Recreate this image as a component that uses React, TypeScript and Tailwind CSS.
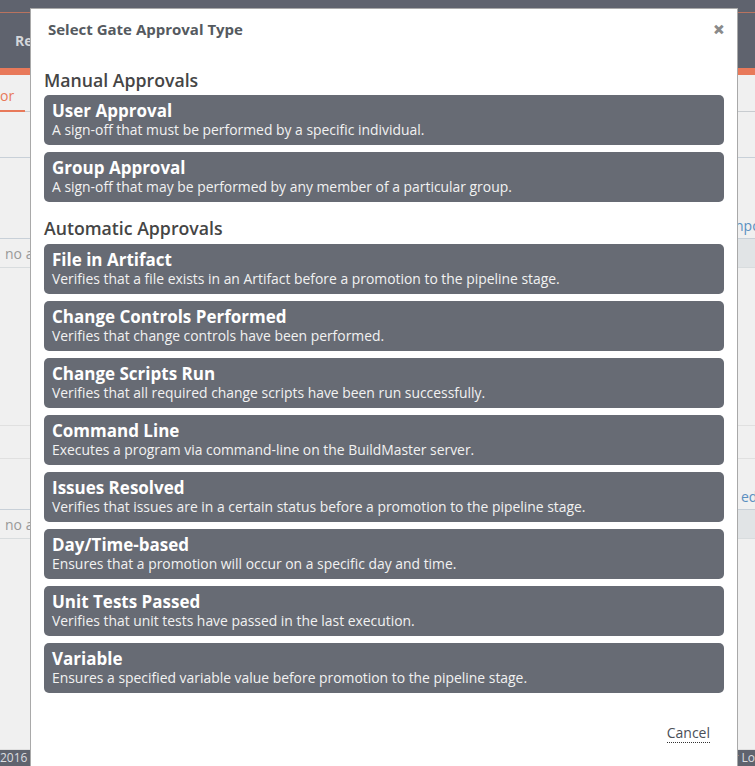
import React from "react";

const manual = [
  { t: "User Approval", d: "A sign-off that must be performed by a specific individual." },
  { t: "Group Approval", d: "A sign-off that may be performed by any member of a particular group." },
];
const auto = [
  { t: "File in Artifact", d: "Verifies that a file exists in an Artifact before a promotion to the pipeline stage." },
  { t: "Change Controls Performed", d: "Verifies that change controls have been performed." },
  { t: "Change Scripts Run", d: "Verifies that all required change scripts have been run successfully." },
  { t: "Command Line", d: "Executes a program via command-line on the BuildMaster server." },
  { t: "Issues Resolved", d: "Verifies that issues are in a certain status before a promotion to the pipeline stage." },
  { t: "Day/Time-based", d: "Ensures that a promotion will occur on a specific day and time." },
  { t: "Unit Tests Passed", d: "Verifies that unit tests have passed in the last execution." },
  { t: "Variable", d: "Ensures a specified variable value before promotion to the pipeline stage." },
];

function Card({ t, d }: { t: string; d: string }) {
  return (
    <div className="h-[50px] rounded-[5px] bg-[#676b74] px-[8px] pt-[5px] text-white cursor-pointer">
      <div className="text-[17px] font-bold leading-[22px]">{t}</div>
      <div className="text-[13.9px] leading-[15px] text-[#f2f2f2]">{d}</div>
    </div>
  );
}

export default function App() {
  return (
    <div className="relative w-[755px] h-[766px] overflow-hidden bg-[#f0f0f0]" style={{ fontFamily: "'Open Sans', Lato, sans-serif" }}>
      {/* background page */}
      <div className="flex flex-col h-full">
        <div className="h-[68px] bg-[#5f636e] flex flex-col">
          <div className="h-[12px]" />
          <div className="h-px bg-[#b9735f]" />
          <div className="flex-1 flex items-center pl-[15px] text-[14px] font-bold text-[#d4d6da]">Re</div>
        </div>
        <div className="h-[7px] bg-[#e8795a]" />
        <div className="h-[37px] flex items-end">
          <div className="w-[25px] h-[30px] border-b-2 border-[#e8795a] text-[#e8795a] text-[14px] leading-[28px]">or</div>
          <div className="flex-1 border-b border-[#c8ccd0]" />
        </div>
        <div className="h-[46px] border-b border-[#c8d0d8]" />
        <div className="h-[80px] flex items-end justify-end">
          <div className="text-[#5a8fc0] text-[14px] pb-[2px] w-[20px] overflow-hidden whitespace-nowrap">npo</div>
        </div>
        <div className="h-px bg-[#c8d0d8]" />
        <div className="h-[28px] flex">
          <div className="w-[700px] flex items-center text-[14px] text-[#999] pl-[5px]">no a</div>
          <div className="flex-1 bg-[#e1e4e6]" />
        </div>
        <div className="h-px bg-[#d8dcde]" />
        <div className="h-[158px] border-b border-[#e0e0e0]" />
        <div className="h-[33px] border-b border-[#e0e0e0]" />
        <div className="h-[50px] flex items-end justify-end">
          <div className="text-[#5a8fc0] text-[14px] pb-[2px] w-[14px] overflow-hidden">ed</div>
        </div>
        <div className="h-px bg-[#c8d0d8]" />
        <div className="h-[28px] flex">
          <div className="w-[700px] flex items-center text-[14px] text-[#999] pl-[5px]">no a</div>
          <div className="flex-1 bg-[#e1e4e6]" />
        </div>
        <div className="h-px bg-[#d8dcde]" />
        <div className="flex-1 border-b border-[#e0e0e0]" />
        <div className="h-[16px] bg-[#5f636e] flex justify-between items-center text-[12px] text-[#dcdde0] leading-[14px]">
          <span>2016 I</span>
          <span>r Lo</span>
        </div>
      </div>

      {/* modal */}
      <div className="absolute left-[30px] top-[8px] w-[708px] h-[800px] bg-white border border-[#a9a9a9]">
        <div className="h-[40px] flex items-center justify-between pl-[17px] pr-[12px]">
          <div className="text-[15px] font-bold text-[#555a60]">Select Gate Approval Type</div>
          <div className="text-[21px] font-extrabold text-[#8a8a8a] leading-none">×</div>
        </div>
        <div className="px-[13px] pt-[20px]">
          <div className="text-[17.7px] font-semibold text-[#454545] h-[26px] leading-[22px]">Manual Approvals</div>
          <div className="flex flex-col gap-[7px]">
            {manual.map((c) => <Card key={c.t} {...c} />)}
          </div>
          <div className="text-[17.7px] font-semibold text-[#454545] h-[42px] leading-[22px] pt-[15px]">Automatic Approvals</div>
          <div className="flex flex-col gap-[7px]">
            {auto.map((c) => <Card key={c.t} {...c} />)}
          </div>
          <div className="flex justify-end pr-[14px] pt-[31px]">
            <span className="text-[14px] text-[#4a4f57] border-b border-dotted border-[#333] leading-[18px]">Cancel</span>
          </div>
        </div>
      </div>
    </div>
  );
}
